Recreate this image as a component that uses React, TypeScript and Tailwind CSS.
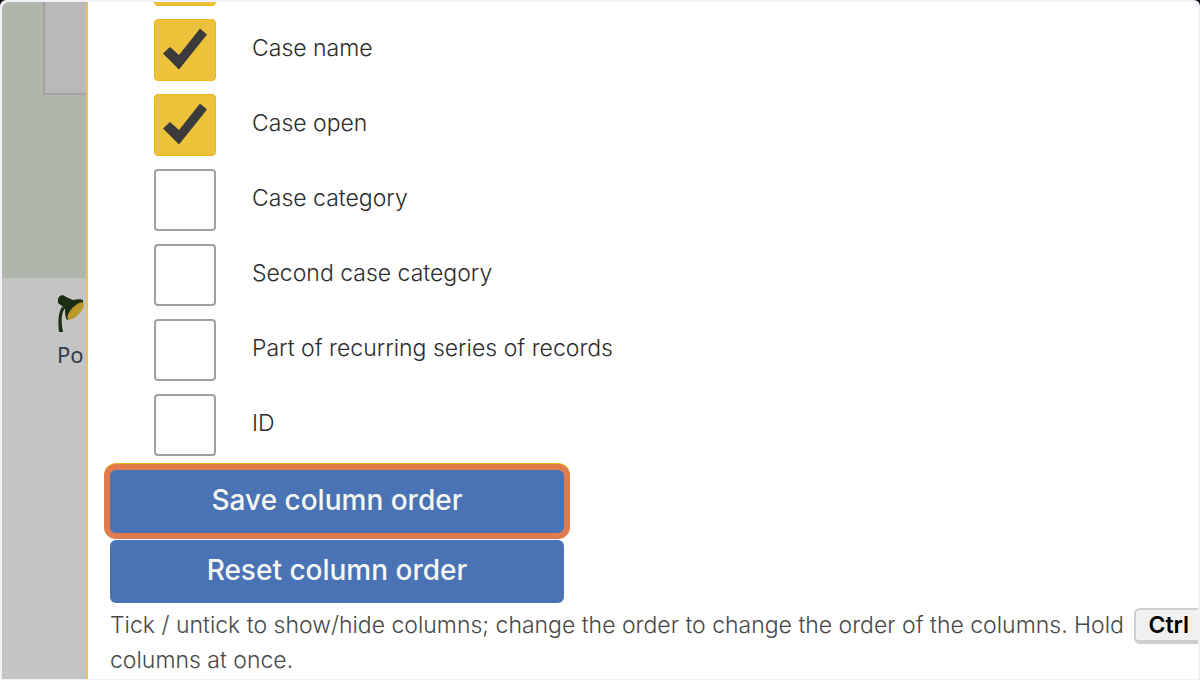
import { useState } from "react";

const initialColumns = [
  { id: "reference", label: "", name: "Reference", checked: true },
  { id: "case-name", label: "Case name", name: "Case name", checked: true },
  { id: "case-open", label: "Case open", name: "Case open", checked: true },
  { id: "case-category", label: "Case category", name: "Case category", checked: false },
  { id: "second-category", label: "Second case category", name: "Second case category", checked: false },
  { id: "recurring", label: "Part of recurring series of records", name: "Part of recurring series of records", checked: false },
  { id: "id", label: "ID", name: "ID", checked: false },
];

function LampIcon() {
  return (
    <svg viewBox="0 0 28 38" className="block h-[38px] w-7" aria-hidden="true">
      <path d="M5 13C1 19 1 27 2 38H6C4 27 4 20 8 14Z" fill="#1d3016" />
      <path d="M1 5C2 1 6 0 9 3L16 6C20 5 24 5 26 6V9L12 25L10 26C8 23 8 19 8 15L5 12L1 9Z" fill="#1b2d12" />
      <ellipse cx="18.7" cy="17" rx="4.5" ry="11" transform="rotate(43 18.7 17)" fill="#ba982b" />
    </svg>
  );
}

function ColumnRow({ id, label, name, checked, onToggle }: {
  id: string;
  label: string;
  name: string;
  checked: boolean;
  onToggle: () => void;
}) {
  return (
    <li className="flex gap-9">
      <span className="grid h-[62px] w-[62px] shrink-0">
        <input
          id={id}
          type="checkbox"
          aria-label={name}
          checked={checked}
          onChange={onToggle}
          className="col-start-1 row-start-1 h-full w-full appearance-none rounded-[4px] border-2 border-[#a0a0a0] bg-white checked:border checked:border-[#e8b71d] checked:bg-[#ebc239]"
        />
        {checked && (
          <svg viewBox="0 0 62 62" className="pointer-events-none col-start-1 row-start-1" aria-hidden="true">
            <path d="M9 34.5L16 28L25 36L46 9.5L53 15.5L25 50.5Z" fill="#3b3b3b" />
          </svg>
        )}
      </span>
      <label htmlFor={id} className="pt-[13px] text-[23px] leading-8 font-light text-[#2c2c2c]">{label}</label>
    </li>
  );
}

export default function App() {
  const [columns, setColumns] = useState(initialColumns);
  const toggle = (id: string) =>
    setColumns(columns.map((c) => (c.id === id ? { ...c, checked: !c.checked } : c)));
  const button = "h-[63px] w-full rounded-md bg-[#4973b5] pb-1 text-[28px] font-medium text-[#f7f7f2]";

  return (
    <div className="h-screen bg-black font-['Inter',sans-serif]">
      <div className="flex h-full overflow-hidden rounded-t-[6px] border-2 border-b border-[#f1f1f7] bg-[#f1f1f7]">
        <aside className="flex w-[84px] shrink-0 flex-col overflow-hidden rounded-tl-lg bg-[#c4c4c4]">
          <div className="h-[276px] shrink-0 bg-[#b0b6ac] pl-[41px]">
            <div className="h-[93px] border-b-2 border-l-2 border-[#a3a3a3] bg-[#b9b9b9]" />
          </div>
          <a href="#po" className="flex flex-col gap-1 pt-4 pl-[55px] font-['Noto_Sans',sans-serif] text-[22px] leading-9 text-[#343a4c]">
            <LampIcon />
            Po
          </a>
        </aside>
        <main className="min-w-0 flex-1 overflow-hidden rounded-tr-lg border-l-2 border-[#eac256] bg-white">
          <form className="pl-[22px]" onSubmit={(e) => e.preventDefault()}>
            <ul className="-mt-[58px] flex flex-col gap-[13px] pl-11">
              {columns.map((column) => (
                <ColumnRow key={column.id} {...column} onToggle={() => toggle(column.id)} />
              ))}
            </ul>
            <div className="mt-[14px] flex w-[454px] max-w-full flex-col gap-[7px]">
              <button type="submit" className={`${button} shadow-[0_-1px_0_6px_#e9b21f] ring-6 ring-[#e07b4d]`}>
                Save column order
              </button>
              <button type="button" className={button} onClick={() => setColumns(initialColumns)}>
                Reset column order
              </button>
            </div>
            <p className="mt-[5px] text-[23px] leading-[35px] font-light whitespace-nowrap text-[#484848]">
              Tick / untick to show/hide columns; change the order to change the order of the columns. Hold{" "}
              <kbd className="-my-1 ml-1 inline-block rounded-md border-2 border-b-4 border-[#cfcfcf] bg-[#f0f0f0] px-3 font-['Inter',sans-serif] leading-[30px] font-semibold text-black">
                Ctrl
              </kbd>
              <br />
              columns at once.
            </p>
          </form>
        </main>
      </div>
    </div>
  );
}
